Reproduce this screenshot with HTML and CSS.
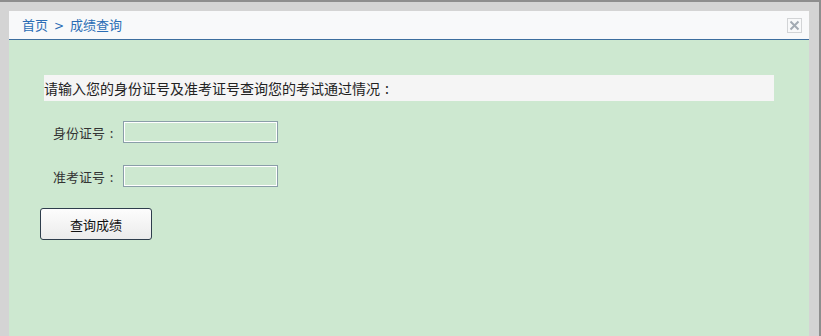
FILE: index.html
```html
<!DOCTYPE html>
<html lang="zh-CN">
<head>
    <meta charset="UTF-8">
    <title>成绩查询</title>
    <link rel="stylesheet" href="styles.css">
</head>
<body>
    <div class="page">
        <div class="dialog">
            <div class="dialog-title">
                <span class="crumbs">首页<span class="sep">&gt;</span>成绩查询</span>
                <span class="close-btn">
                    <svg width="13" height="13" viewBox="0 0 13 13">
                        <path d="M2.5 2.5 L10.5 10.5 M10.5 2.5 L2.5 10.5" stroke="#a3abb3" stroke-width="2" fill="none"/>
                    </svg>
                </span>
            </div>
            <div class="dialog-body">
                <div class="notice">请输入您的身份证号及准考证号查询您的考试通过情况<span class="colon">:</span></div>
                <div class="form-row">
                    <label class="form-label">身份证号<span class="colon">:</span></label>
                    <input type="text" class="form-input">
                </div>
                <div class="form-row">
                    <label class="form-label">准考证号<span class="colon">:</span></label>
                    <input type="text" class="form-input">
                </div>
                <button class="query-btn">查询成绩</button>
            </div>
        </div>
        <div class="side-gap"></div>
        <div class="side-edge"></div>
    </div>
</body>
</html>
```

FILE: styles.css
```css
body, html {
    margin: 0;
    padding: 0;
    height: 100%;
    font-family: "Noto Sans CJK SC", "Liberation Sans", sans-serif;
    background-color: #d4d4d4;
}

.page {
    display: flex;
    height: 100%;
    border-top: 2px solid #8e8e8e;
    box-sizing: border-box;
    padding-left: 9px;
}

.dialog {
    width: 800px;
    margin-top: 9px;
    display: flex;
    flex-direction: column;
}

.dialog-title {
    height: 28px;
    background-color: #f8f9fa;
    border-bottom: 1px solid #3d6e9e;
    display: flex;
    align-items: center;
    justify-content: space-between;
    padding: 0 7px 0 13px;
}

.crumbs {
    font-size: 13px;
    color: #2a6db5;
    line-height: 28px;
}

.crumbs .sep {
    font-family: "DejaVu Sans", sans-serif;
    font-size: 12px;
    margin: 0 6px;
}

.colon {
    display: inline-block;
    width: 1em;
    text-align: center;
}

.close-btn {
    width: 13px;
    height: 13px;
    border: 1px solid #d2d4d6;
    display: flex;
    margin-top: 1px;
}

.dialog-body {
    flex: 1;
    background-color: #cde8d0;
    padding: 35px 0 0 31px;
}

.notice {
    margin-left: 4px;
    width: 730px;
    height: 26px;
    line-height: 26px;
    background-color: #f5f5f5;
    font-size: 14px;
    color: #222;
}

.form-row {
    display: flex;
    align-items: center;
    margin-top: 20px;
    padding-left: 13px;
}

.form-row + .form-row {
    margin-top: 22px;
}

.form-label {
    width: 70px;
    font-size: 13px;
    color: #333;
}

.form-input {
    width: 155px;
    height: 22px;
    box-sizing: border-box;
    border: 1px solid #8a9ea9;
    box-shadow: inset 0 0 0 1px #ffffff;
    background-color: #cde8d0;
    margin: 0;
    padding: 0 3px;
}

.query-btn {
    display: block;
    margin-top: 21px;
    width: 112px;
    height: 32px;
    border: 1px solid #2e3d4c;
    border-radius: 3px;
    background: linear-gradient(#fdfdfd, #ebebeb);
    font-family: "Noto Sans CJK SC", sans-serif;
    font-size: 13px;
    color: #111;
    cursor: pointer;
}

.side-gap {
    width: 10px;
}

.side-edge {
    width: 2px;
    background-color: #8e8e8e;
}
```
